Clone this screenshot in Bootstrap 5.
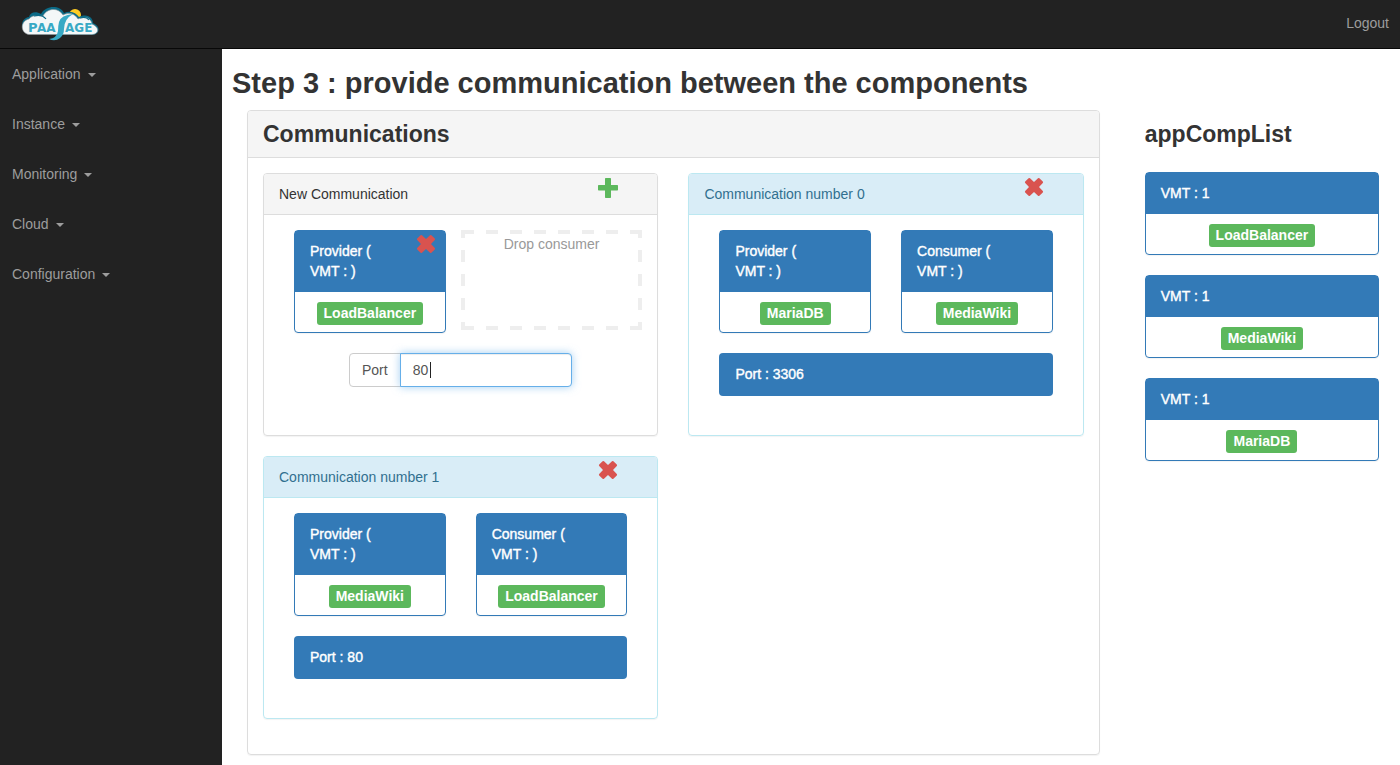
<!DOCTYPE html>
<html lang="en">
<head>
<meta charset="utf-8">
<meta name="viewport" content="width=device-width, initial-scale=1">
<title>PaaSage</title>
<link rel="stylesheet" href="https://cdn.jsdelivr.net/npm/bootstrap@5.3.0/dist/css/bootstrap.min.css">
<style>
  body { font: 14px/20px "Liberation Sans", Arial, sans-serif; color: #333; }
  .topbar { background: #222; border-bottom: 1px solid #080808; height: 49px; padding: 0 11px 0 20px; }
  .topbar svg { display: block; }
  .topbar a, .side a { color: #9d9d9d; text-decoration: none; }
  .logout { padding-top: 13px; }
  .side { background: #222; width: 222px; }
  .side a { padding: 15px 12px; }
  .side .dropdown-toggle::after { border-top-width: 4px; border-left-width: 4px; border-right-width: 4px; margin-left: 7px; vertical-align: 2px; }
  .shell { min-height: calc(100vh - 49px); }
  .page { padding: 18px 0 10px 10px; min-width: 0; overflow: hidden; }
  .vm-head, .port-box { -webkit-text-stroke: .4px currentColor; }
  h1, h2 { font-weight: 700; margin: 0; }
  h1 { font-size: 29px; line-height: 33px; margin-bottom: 10px; }
  h2 { font-size: 23px; line-height: 26px; }
  .page-row { margin: 0 -9px 0 0; --bs-gutter-x: 30px; }
  .page-row .row { --bs-gutter-x: 30px; }
  .panel { border: 1px solid #ddd; border-radius: 4px; box-shadow: 0 1px 1px rgba(0,0,0,.05); }
  .panel-top { background: #f5f5f5; border-bottom: 1px solid #ddd; border-radius: 3px 3px 0 0; padding: 10px 15px; }
  .panel-in { padding: 15px; }
  .comm { margin-bottom: 20px; }
  .comm .panel { height: 100%; }
  .comm-top { padding: 0 38px 0 15px; }
  .comm-top span { padding: 10px 0; }
  .comm-top button { margin-top: 3px; }
  .comm-in { padding: 15px 30px 19px; }
  .panel-info { border-color: #bce8f1; }
  .panel-info .comm-top { background: #d9edf7; border-color: #bce8f1; color: #31708f; }
  .panel-info .comm-top button { margin-top: 2px; }
  .icon-btn { background: none; border: 0; padding: 0; display: block; height: 22px; }
  .icon-btn svg { display: block; }
  .vm { border: 1px solid #337ab7; border-radius: 4px; margin-bottom: 20px; box-shadow: 0 1px 1px rgba(0,0,0,.05); }
  .vm-head { background: #337ab7; border-bottom: 1px solid #337ab7; color: #fff; padding: 10px 15px; }
  .vm-in { padding: 10px 15px 7px; }
  .vm .icon-btn { position: absolute; top: 2px; right: 8px; }
  .tag { background: #5cb85c; color: #fff; border-radius: 3px; font-size: 14px; font-weight: 700; line-height: 23px; padding: 0 7px; }
  .port-box { background: #337ab7; color: #fff; border-radius: 4px; padding: 11px 16px 12px; margin-bottom: 20px; }
  .drop-zone {
    height: 100px; margin: 0 -15px; padding-top: 4px; color: #999; text-align: center;
    background:
      repeating-linear-gradient(90deg, #eee 0 12px, transparent 12px 24px) 1px 0 / 100% 4px no-repeat,
      repeating-linear-gradient(90deg, #eee 0 12px, transparent 12px 24px) 1px 100% / 100% 4px no-repeat,
      repeating-linear-gradient(#eee 0 8px, transparent 8px 20px, #eee 20px 24px) 0 0 / 4px 100% no-repeat,
      repeating-linear-gradient(#eee 0 8px, transparent 8px 20px, #eee 20px 24px) 100% 0 / 4px 100% no-repeat;
  }
  .port-entry { width: 67%; }
  .port-entry label { background: #fff; color: #555; border-color: #ccc; border-radius: 4px; font-size: 14px; line-height: 20px; padding: 6px 12px; }
  .port-entry input { border-color: #66afe9; border-radius: 4px; color: #555; font-size: 14px; line-height: 20px; padding: 6px 12px; box-shadow: inset 0 1px 1px rgba(0,0,0,.075), 0 0 8px rgba(102,175,233,.6); }
  .text-cursor { position: absolute; z-index: 6; left: 81px; top: 9px; width: 1px; height: 16px; background: #222; }
  .app-list { padding: 11px 30px 0; }
  .app-list h2 { margin-bottom: 25px; }
</style>
</head>
<body>
<svg width="0" height="0" class="position-absolute" aria-hidden="true">
  <symbol id="cross" viewBox="0 0 22 22"><path fill="#d9534f" d="M2.200 5.600 5.600 2.200q.7-.6 1.400 0L11 6l4-3.800q.7-.6 1.400 0l3.400 3.400q.6.700 0 1.400L16 11l3.800 4q.6.700 0 1.400l-3.400 3.400q-.7.600-1.400 0L11 16l-4 3.800q-.7.600-1.400 0l-3.400-3.400q-.6-.7 0-1.400L6 11 2.200 7q-.6-.7 0-1.400z"/></symbol>
  <symbol id="plus" viewBox="0 0 22 22"><path fill="#5cb85c" d="M8.700 1h4.600q.7 0 .7.700V8h6.300q.7 0 .7.700v4.100q0 .7-.7.700H14v6.800q0 .7-.7.700H8.700q-.7 0-.7-.7v-6.800H1.700q-.7 0-.7-.7V8.700Q1 8 1.700 8H8V1.700Q8 1 8.700 1z"/></symbol>
</svg>

<header class="topbar d-flex justify-content-between">
  <a href="#" aria-label="PaaSage">
    <svg width="80" height="48" viewBox="0 0 80 48" role="img">
      <circle cx="55" cy="15" r="6" fill="#fc2"/>
      <path fill="#0b6a86" d="M11 34C-1 32 0 18 9 17 10 12 16 11 21 14 26 5 40 5 44 13 51 10 56 13 59 17 68 13 73 18 73 23 82 27 79 35 72 35z"/>
      <path fill="#f4f7f8" stroke="#8b9699" stroke-width=".6" d="M9 34.500C0 33 0 21 9 19 13 14 19 16 23 16 27 8 38 7 43 15 50 12 55 14 58 19 66 15 71 19 72 24 81 28 78 35 71 34.500z"/>
      <path fill="none" stroke="#0b6a86" stroke-width="1.200" d="M14 16q8-2 12 3M60 18q6-2 9 2"/>
      <path fill="#38a9c5" d="M53 14Q41 15 39 22 38 26 38 31 37 38 29 39 35 42 40 38 44 35 44 29 44 19 53 14z"/>
      <g fill="#38a9c5" font-family="DejaVu Sans, sans-serif" font-weight="700">
        <text x="8" y="32" font-size="13">P</text>
        <text x="17" y="32" font-size="12">AA</text>
        <text x="45" y="32" font-size="12">AGE</text>
      </g>
    </svg>
  </a>
  <a href="#" class="logout">Logout</a>
</header>

<div class="shell d-flex">
  <nav class="side flex-shrink-0 d-flex flex-column">
    <a href="#" class="dropdown-toggle">Application</a>
    <a href="#" class="dropdown-toggle">Instance</a>
    <a href="#" class="dropdown-toggle">Monitoring</a>
    <a href="#" class="dropdown-toggle">Cloud</a>
    <a href="#" class="dropdown-toggle">Configuration</a>
  </nav>

  <main class="page flex-grow-1">
    <h1>Step 3 : provide communication between the components</h1>
    <div class="row page-row">
      <div class="col-9">
        <section class="panel">
          <div class="panel-top"><h2>Communications</h2></div>
          <div class="panel-in">
            <div class="row">
              <div class="col-6 comm">
                <div class="panel">
                  <div class="panel-top comm-top d-flex justify-content-between align-items-start">
                    <span>New Communication</span>
                    <button class="icon-btn" type="button" aria-label="Add communication"><svg width="22" height="22"><use href="#plus"/></svg></button>
                  </div>
                  <div class="comm-in">
                    <div class="row">
                      <div class="col-6">
                        <div class="vm position-relative">
                          <div class="vm-head">Provider (<br>VMT : )</div>
                          <button class="icon-btn" type="button" aria-label="Remove provider"><svg width="22" height="22"><use href="#cross"/></svg></button>
                          <div class="vm-in d-flex justify-content-center"><span class="tag">LoadBalancer</span></div>
                        </div>
                      </div>
                      <div class="col-6"><div class="drop-zone">Drop consumer</div></div>
                    </div>
                    <div class="port-entry position-relative mx-auto">
                      <div class="input-group">
                        <label class="input-group-text" for="port">Port</label>
                        <input class="form-control" id="port" type="text" value="80">
                      </div>
                      <i class="text-cursor" aria-hidden="true"></i>
                    </div>
                  </div>
                </div>
              </div>

              <div class="col-6 comm">
                <div class="panel panel-info">
                  <div class="panel-top comm-top d-flex justify-content-between align-items-start">
                    <span>Communication number 0</span>
                    <button class="icon-btn" type="button" aria-label="Remove communication 0"><svg width="22" height="22"><use href="#cross"/></svg></button>
                  </div>
                  <div class="comm-in">
                    <div class="row">
                      <div class="col-6"><div class="vm">
                        <div class="vm-head">Provider (<br>VMT : )</div>
                        <div class="vm-in d-flex justify-content-center"><span class="tag">MariaDB</span></div>
                      </div></div>
                      <div class="col-6"><div class="vm">
                        <div class="vm-head">Consumer (<br>VMT : )</div>
                        <div class="vm-in d-flex justify-content-center"><span class="tag">MediaWiki</span></div>
                      </div></div>
                    </div>
                    <div class="port-box">Port : 3306</div>
                  </div>
                </div>
              </div>

              <div class="col-6 comm">
                <div class="panel panel-info">
                  <div class="panel-top comm-top d-flex justify-content-between align-items-start">
                    <span>Communication number 1</span>
                    <button class="icon-btn" type="button" aria-label="Remove communication 1"><svg width="22" height="22"><use href="#cross"/></svg></button>
                  </div>
                  <div class="comm-in">
                    <div class="row">
                      <div class="col-6"><div class="vm">
                        <div class="vm-head">Provider (<br>VMT : )</div>
                        <div class="vm-in d-flex justify-content-center"><span class="tag">MediaWiki</span></div>
                      </div></div>
                      <div class="col-6"><div class="vm">
                        <div class="vm-head">Consumer (<br>VMT : )</div>
                        <div class="vm-in d-flex justify-content-center"><span class="tag">LoadBalancer</span></div>
                      </div></div>
                    </div>
                    <div class="port-box">Port : 80</div>
                  </div>
                </div>
              </div>
            </div>
          </div>
        </section>
      </div>

      <aside class="col-3 app-list">
        <h2>appCompList</h2>
        <div class="vm">
          <div class="vm-head">VMT : 1</div>
          <div class="vm-in d-flex justify-content-center"><span class="tag">LoadBalancer</span></div>
        </div>
        <div class="vm">
          <div class="vm-head">VMT : 1</div>
          <div class="vm-in d-flex justify-content-center"><span class="tag">MediaWiki</span></div>
        </div>
        <div class="vm">
          <div class="vm-head">VMT : 1</div>
          <div class="vm-in d-flex justify-content-center"><span class="tag">MariaDB</span></div>
        </div>
      </aside>
    </div>
  </main>
</div>
<script src="https://cdn.jsdelivr.net/npm/bootstrap@5.3.0/dist/js/bootstrap.bundle.min.js"></script>
</body>
</html>
